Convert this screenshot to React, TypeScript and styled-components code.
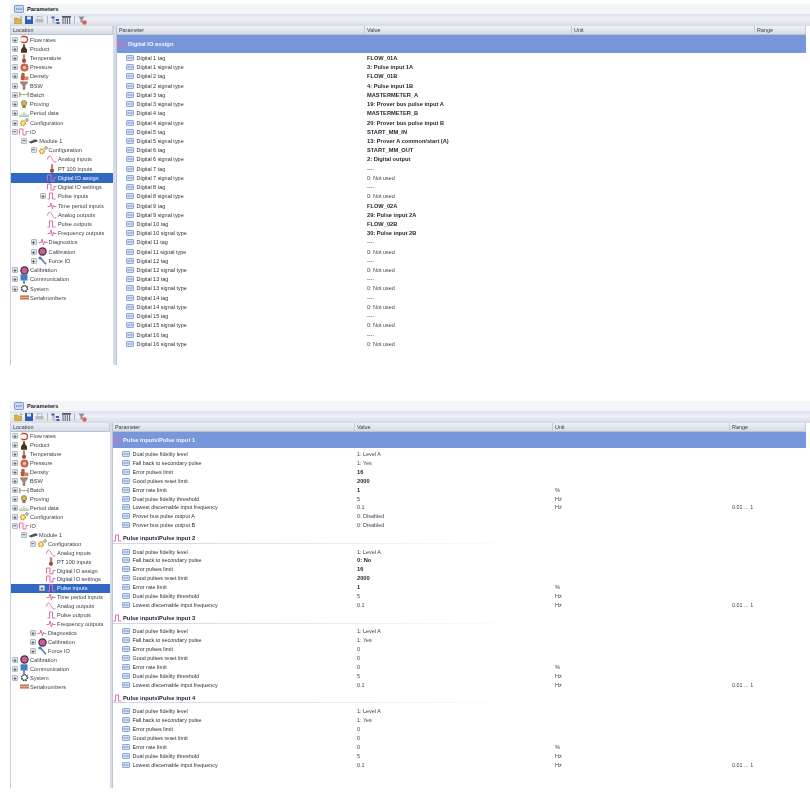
import React from "react";
import styled, { createGlobalStyle } from "styled-components";

type IconKind =
  | "flow" | "bottle" | "thermo" | "gauge" | "density" | "bsw" | "batch" | "proving" | "chart"
  | "gear" | "digital" | "module" | "analog" | "pulse" | "freq" | "calib" | "wrench" | "comm"
  | "system" | "serial";

interface TreeNode {
  label: string;
  icon: IconKind;
  level: number;
  toggle?: "+" | "-";
  selected?: boolean;
}

interface ParamRow {
  name: string;
  value: string;
  strong?: boolean;
  unit?: string;
  range?: string;
}

interface Metrics {
  columns: string;
  treeRow: number;
  treeStep: number;
  row: number;
  rowIndent: number;
  bannerHeight: number;
  bannerGap: number;
  height: number;
  treeWidth: number;
  splitter: number;
}

const GlobalStyle = createGlobalStyle`
  html, body {
    margin: 0;
    background: #fff;
    overflow: hidden;
  }
  body {
    font-family: "Liberation Sans", Arial, sans-serif;
    font-size: 5.45px;
    color: #2c3038;
  }
`;

const Page = styled.div`
  width: 810px;
  height: 797px;
  padding: 4px 0 0 10px;
  box-sizing: border-box;
  display: flex;
  flex-direction: column;
  gap: 36px;
  filter: blur(0.35px);
`;

const Window = styled.section<{ $height: number }>`
  height: ${(p) => p.$height}px;
  display: flex;
  flex-direction: column;
`;

const TitleBar = styled.header`
  height: 10px;
  flex: none;
  display: flex;
  align-items: center;
  gap: 3px;
  padding-left: 4px;
  background: #f3f5f9;
  font-weight: bold;
  font-size: 5.8px;
  color: #20242c;
`;

const ToolBar = styled.div`
  height: 12px;
  flex: none;
  display: flex;
  align-items: center;
  gap: 2px;
  padding-left: 4px;
  background: linear-gradient(#dde3ec, #eceff4 45%, #d5dbe6);
`;

const ToolSep = styled.span`
  width: 1px;
  height: 8px;
  margin: 0 1px;
  background: #b4bcc9;
`;

const Body = styled.div`
  flex: 1;
  min-height: 0;
  display: flex;
  border-left: 1px solid #c3cfe2;
`;

const TreePane = styled.nav<{ $width: number }>`
  width: ${(p) => p.$width}px;
  flex: none;
  display: flex;
  flex-direction: column;
`;

const Splitter = styled.div<{ $width: number }>`
  width: ${(p) => p.$width}px;
  box-sizing: border-box;
  flex: none;
  background: #d5dce7;
  border-right: 1px solid #b9c5d6;
`;

const HeadCell = styled.div`
  height: 8px;
  line-height: 8px;
  padding-left: 2px;
  background: linear-gradient(#eef1f5, #d6dce5);
  border-bottom: 1px solid #b8c2d2;
  border-right: 1px solid #c4ccd8;
  color: #3a4048;
  font-size: 5.4px;
  box-sizing: content-box;
`;

const TreeList = styled.ul`
  list-style: none;
  margin: 0;
  padding: 0;
`;

const TreeItem = styled.li<{ $height: number; $indent: number; $selected?: boolean }>`
  height: ${(p) => p.$height}px;
  display: flex;
  align-items: center;
  padding-left: ${(p) => p.$indent}px;
  background: ${(p) => (p.$selected ? "#3168c4" : "transparent")};
  color: ${(p) => (p.$selected ? "#f2f5fb" : "#3a3f48")};
  font-size: 5.6px;
  white-space: nowrap;
`;

const Toggle = styled.span`
  width: 6px;
  height: 6px;
  flex: none;
  display: flex;
  align-items: center;
  justify-content: center;
  border: 1px solid #b4b9c1;
  box-sizing: border-box;
  border-radius: 1px;
  background: #e2e5ea;
  font-size: 6px;
  line-height: 1;
  font-weight: bold;
  color: #25282e;
`;

const ToggleSlot = styled.span`
  width: 7px;
  flex: none;
  display: flex;
`;

const IconSlot = styled.span`
  width: 10px;
  flex: none;
  display: flex;
  justify-content: center;
  margin-right: 1px;
`;

const Grid = styled.main`
  flex: 1;
  min-width: 0;
  margin-right: 4px;
  display: flex;
  flex-direction: column;
`;

const GridHead = styled.div<{ $columns: string }>`
  display: grid;
  grid-template-columns: ${(p) => p.$columns};
`;

const Banner = styled.div<{ $height: number; $gap: number }>`
  height: ${(p) => p.$height}px;
  margin-bottom: ${(p) => p.$gap}px;
  display: flex;
  align-items: center;
  gap: 1px;
  background: #7896dc;
  color: #f5f7fc;
  font-weight: bold;
  font-size: 5.8px;
`;

const SectionTitle = styled.div`
  height: 9px;
  margin-bottom: 3.3px;
  padding-top: 4px;
  box-sizing: content-box;
  display: flex;
  align-items: center;
  gap: 1px;
  font-weight: bold;
  font-size: 5.8px;
  color: #20242c;
  border-bottom: 1px solid transparent;
  border-image: linear-gradient(to right, #ccd5e4, #eef1f6 40%, #fff 60%) 1;
`;

const Row = styled.div<{ $columns: string; $height: number }>`
  height: ${(p) => p.$height}px;
  display: grid;
  grid-template-columns: ${(p) => p.$columns};
  align-items: center;
  white-space: nowrap;
`;

const NameCell = styled.div<{ $indent: number }>`
  display: flex;
  align-items: center;
  gap: 2.5px;
  padding-left: ${(p) => p.$indent}px;
`;

const ValueCell = styled.div<{ $strong?: boolean }>`
  padding-left: 2px;
  font-weight: ${(p) => (p.$strong ? "bold" : "normal")};
  font-size: ${(p) => (p.$strong ? "5.7px" : "5.45px")};
  color: ${(p) => (p.$strong ? "#1c2028" : "#3a3f48")};
`;

const ParamIcon = () => (
  <svg width="8" height="6" viewBox="0 0 8 6">
    <rect x="0.5" y="0.5" width="7" height="5" rx="0.6" fill="#d5e2f6" stroke="#6f97d6" strokeWidth="0.8" />
    <path d="M1.6 3h1.2M3.4 3h1.2M5.2 3h1.2" stroke="#5478b0" strokeWidth="1" />
  </svg>
);

const wave = { fill: "none", stroke: "#df6cb0", strokeWidth: 1 };

const TreeIcon = ({ kind }: { kind: IconKind }) => {
  switch (kind) {
    case "flow":
      return (
        <svg width="9" height="9" viewBox="0 0 9 9">
          <path d="M1.5 1.5h3a3 3 0 0 1 0 6h-3" fill="none" stroke="#c9452f" strokeWidth="1.3" />
          <path d="M0 2.5h2M0 6.5h2" stroke="#d9a040" strokeWidth="0.8" />
        </svg>
      );
    case "bottle":
      return (
        <svg width="8" height="9" viewBox="0 0 8 9">
          <path d="M3.2 .3h1.600v2.200l2.200 3v3.300H1V5.500l2.200-3z" fill="#4a3518" />
        </svg>
      );
    case "thermo":
      return (
        <svg width="8" height="9" viewBox="0 0 8 9">
          <rect x="2.8" y="0.3" width="2.4" height="6" fill="#bd8878" />
          <circle cx="4" cy="6.8" r="2.1" fill="#a04a3a" />
        </svg>
      );
    case "gauge":
      return (
        <svg width="9" height="9" viewBox="0 0 9 9">
          <circle cx="4.5" cy="4.5" r="4" fill="#c4674c" />
          <circle cx="4.5" cy="4.5" r="1.8" fill="#e9bfae" />
        </svg>
      );
    case "density":
      return (
        <svg width="9" height="9" viewBox="0 0 9 9">
          <circle cx="3" cy="2.5" r="1.8" fill="#b65a3a" />
          <rect x="0.8" y="3.5" width="4" height="4.8" rx="0.8" fill="#b65a3a" />
          <rect x="4.5" y="4.5" width="4" height="3.8" rx="0.8" fill="#d58a68" />
        </svg>
      );
    case "bsw":
      return (
        <svg width="8" height="9" viewBox="0 0 8 9">
          <path d="M.4.800h7.200v1L5 4.800V8.600H3V4.800L.4 1.800z" fill="#a58a72" stroke="#6c5a4a" strokeWidth="0.4" />
        </svg>
      );
    case "batch":
      return (
        <svg width="10" height="7" viewBox="0 0 10 7">
          <path d="M.8 1v5M9.200 1v5" stroke="#7f7450" strokeWidth="0.9" />
          <path d="M1 3.5h2.500M6.500 3.500h2.500" stroke="#7aa860" strokeWidth="0.9" />
          <circle cx="5" cy="3.5" r="0.8" fill="#6f8a50" />
        </svg>
      );
    case "proving":
      return (
        <svg width="8" height="9" viewBox="0 0 8 9">
          <circle cx="4" cy="3.2" r="2.8" fill="#cdb060" stroke="#7a6228" strokeWidth="0.5" />
          <path d="M2.5 5.500v3l1.500-1 1.500 1v-3" fill="#8a7038" />
        </svg>
      );
    case "chart":
      return (
        <svg width="10" height="7" viewBox="0 0 10 7">
          <path d="M1 6V4.500M3 6V3.500M5 6V2M7 6V3.500M9 6V4.500" stroke="#a4bc98" strokeWidth="1" />
          <path d="M0 6.4h10" stroke="#8ca880" strokeWidth="0.7" />
        </svg>
      );
    case "gear":
      return (
        <svg width="10" height="9" viewBox="0 0 10 9">
          <circle cx="4" cy="5.3" r="2.3" fill="#fbe6b0" stroke="#e09a20" strokeWidth="1.5" strokeDasharray="1.5 .5" />
          <circle cx="8" cy="2" r="1.3" fill="#fff" stroke="#6f6f68" strokeWidth="0.8" />
        </svg>
      );
    case "digital":
      return (
        <svg width="10" height="8" viewBox="0 0 10 8">
          <path d="M.5 6.500V1H4v6h3V3.500h2.500" {...wave} />
        </svg>
      );
    case "module":
      return (
        <svg width="10" height="6" viewBox="0 0 10 6">
          <path d="M.5 4 7 1.200l2.500.8v1.400L3 5.500z" fill="#55585e" />
        </svg>
      );
    case "analog":
      return (
        <svg width="10" height="8" viewBox="0 0 10 8">
          <path d="M.5 4.500C1.500 0 3.500 0 5 3.500S8 8 9.500 6" {...wave} />
        </svg>
      );
    case "pulse":
      return (
        <svg width="9" height="8" viewBox="0 0 9 8">
          <path d="M.5 7H2.500V1H5.500V7H8.500" {...wave} />
        </svg>
      );
    case "freq":
      return (
        <svg width="10" height="8" viewBox="0 0 10 8">
          <path d="M.5 4.500H3L4 1l1.500 6L6.500 3 7 4.500H9.500" {...wave} />
        </svg>
      );
    case "calib":
      return (
        <svg width="9" height="9" viewBox="0 0 9 9">
          <circle cx="4.5" cy="4.5" r="4.2" fill="#34343c" />
          <circle cx="4.5" cy="4.5" r="3" fill="#d4589a" />
        </svg>
      );
    case "wrench":
      return (
        <svg width="9" height="9" viewBox="0 0 9 9">
          <path d="M2.5 2 8 8.200" stroke="#4f7cc0" strokeWidth="1.6" />
          <circle cx="2" cy="2" r="1.6" fill="#4f7cc0" />
        </svg>
      );
    case "comm":
      return (
        <svg width="8" height="10" viewBox="0 0 8 10">
          <rect x="0.5" y="0.3" width="7" height="6.2" fill="#4a7cc4" />
          <path d="M4 6.500V9.800" stroke="#3a5a90" strokeWidth="1.4" />
        </svg>
      );
    case "system":
      return (
        <svg width="9" height="9" viewBox="0 0 9 9">
          <circle cx="4.5" cy="4.5" r="2.9" fill="none" stroke="#34363c" strokeWidth="1.7" strokeDasharray="1.5 .7" />
        </svg>
      );
    case "serial":
      return (
        <svg width="9" height="5" viewBox="0 0 9 5">
          <rect width="9" height="5" fill="#e0ae96" />
          <path d="M0 1.500h9M0 3.500h9" stroke="#bd6c50" strokeWidth="0.8" />
        </svg>
      );
  }
};

const ToolIcons = () => (
  <>
    <svg width="9" height="8" viewBox="0 0 9 8">
      <path d="M.5 2h3l1 1h3v4.500h-7z" fill="#e0b040" stroke="#a87c20" strokeWidth="0.5" />
      <path d="M6 .5 8 2" stroke="#4a7a38" strokeWidth="0.8" />
    </svg>
    <svg width="8" height="8" viewBox="0 0 8 8">
      <rect width="8" height="8" rx="0.6" fill="#2f5fb0" />
      <rect x="2" y="0.5" width="4" height="3" fill="#dfe8f6" />
    </svg>
    <svg width="9" height="8" viewBox="0 0 9 8">
      <rect x="2.5" y="0.5" width="4" height="3" fill="#eeeeee" stroke="#a0a5ac" strokeWidth="0.5" />
      <rect x="0.5" y="3" width="8" height="3.5" rx="0.6" fill="#b8bcc2" />
    </svg>
    <ToolSep />
    <svg width="9" height="9" viewBox="0 0 9 9">
      <path d="M2 1v6h5M2 4h4" fill="none" stroke="#7c8798" strokeWidth="0.6" />
      <rect x="0.5" y="0.5" width="3" height="2" fill="#3a5ab8" />
      <rect x="5" y="3" width="3" height="2" fill="#3a5ab8" />
      <rect x="5.5" y="6" width="3" height="2" fill="#3a5ab8" />
    </svg>
    <svg width="9" height="8" viewBox="0 0 9 8">
      <rect width="9" height="1.8" fill="#555a62" />
      <path d="M1 2v6M3.200 2v6M5.400 2v6M7.600 2v6" stroke="#6c7178" strokeWidth="1.1" />
    </svg>
    <ToolSep />
    <svg width="9" height="9" viewBox="0 0 9 9">
      <path d="M.5.500h6L4.500 3.500V7L2.500 6V3.500z" fill="#8a929c" />
      <circle cx="6.5" cy="6.5" r="2.2" fill="#e0604a" />
    </svg>
  </>
);

const TitleIcon = () => (
  <svg width="10" height="8" viewBox="0 0 10 8">
    <rect x="0.5" y="0.5" width="9" height="7" rx="0.8" fill="#c9d9f2" stroke="#5f86c4" strokeWidth="0.8" />
    <path d="M2 4h1.500M4.200 4h1.500M6.400 4h1.500" stroke="#4a6ea8" strokeWidth="1.1" />
  </svg>
);

const buildTree = (selected: string): TreeNode[] => {
  const nodes: TreeNode[] = [
    { label: "Flow rates", icon: "flow", level: 0, toggle: "+" },
    { label: "Product", icon: "bottle", level: 0, toggle: "+" },
    { label: "Temperature", icon: "thermo", level: 0, toggle: "+" },
    { label: "Pressure", icon: "gauge", level: 0, toggle: "+" },
    { label: "Density", icon: "density", level: 0, toggle: "+" },
    { label: "BSW", icon: "bsw", level: 0, toggle: "+" },
    { label: "Batch", icon: "batch", level: 0, toggle: "+" },
    { label: "Proving", icon: "proving", level: 0, toggle: "+" },
    { label: "Period data", icon: "chart", level: 0, toggle: "+" },
    { label: "Configuration", icon: "gear", level: 0, toggle: "+" },
    { label: "IO", icon: "digital", level: 0, toggle: "-" },
    { label: "Module 1", icon: "module", level: 1, toggle: "-" },
    { label: "Configuration", icon: "gear", level: 2, toggle: "-" },
    { label: "Analog inputs", icon: "analog", level: 3 },
    { label: "PT 100 inputs", icon: "thermo", level: 3 },
    { label: "Digital IO assign", icon: "digital", level: 3 },
    { label: "Digital IO settings", icon: "digital", level: 3 },
    { label: "Pulse inputs", icon: "pulse", level: 3, toggle: "+" },
    { label: "Time period inputs", icon: "freq", level: 3 },
    { label: "Analog outputs", icon: "analog", level: 3 },
    { label: "Pulse outputs", icon: "pulse", level: 3 },
    { label: "Frequency outputs", icon: "freq", level: 3 },
    { label: "Diagnostics", icon: "freq", level: 2, toggle: "+" },
    { label: "Calibration", icon: "calib", level: 2, toggle: "+" },
    { label: "Force IO", icon: "wrench", level: 2, toggle: "+" },
    { label: "Calibration", icon: "calib", level: 0, toggle: "+" },
    { label: "Communication", icon: "comm", level: 0, toggle: "+" },
    { label: "System", icon: "system", level: 0, toggle: "+" },
    { label: "Serialnumbers", icon: "serial", level: 0 },
  ];
  return nodes.map((n) => ({ ...n, selected: n.label === selected }));
};

const digitalValues: [string, string][] = [
  ["FLOW_01A", "3: Pulse input 1A"],
  ["FLOW_01B", "4: Pulse input 1B"],
  ["MASTERMETER_A", "19: Prover bus pulse input A"],
  ["MASTERMETER_B", "20: Prover bus pulse input B"],
  ["START_MM_IN", "13: Prover A common/start (A)"],
  ["START_MM_OUT", "2: Digital output"],
  ["----", "0: Not used"],
  ["----", "0: Not used"],
  ["FLOW_02A", "29: Pulse input 2A"],
  ["FLOW_02B", "30: Pulse input 2B"],
  ["----", "0: Not used"],
  ["----", "0: Not used"],
  ["----", "0: Not used"],
  ["----", "0: Not used"],
  ["----", "0: Not used"],
  ["----", "0: Not used"],
];

const digitalRows: ParamRow[] = digitalValues.flatMap(([tag, type], i) => [
  { name: `Digital ${i + 1} tag`, value: tag, strong: tag !== "----" },
  { name: `Digital ${i + 1} signal type`, value: type, strong: type !== "0: Not used" },
]);

const pulseRows = (fallback: string, limit: string, reset: string, rate: string, customised: boolean, prover: boolean): ParamRow[] => {
  const rows: ParamRow[] = [
    { name: "Dual pulse fidelity level", value: "1: Level A" },
    { name: "Fall back to secondary pulse", value: fallback, strong: fallback === "0: No" },
    { name: "Error pulses limit", value: limit, strong: customised },
    { name: "Good pulses reset limit", value: reset, strong: customised },
    { name: "Error rate limit", value: rate, strong: customised, unit: "%" },
    { name: "Dual pulse fidelity threshold", value: "5", unit: "Hz" },
    { name: "Lowest discernable input frequency", value: "0.1", unit: "Hz", range: "0.01 ... 1" },
  ];
  if (prover) {
    rows.push(
      { name: "Prover bus pulse output A", value: "0: Disabled" },
      { name: "Prover bus pulse output B", value: "0: Disabled" }
    );
  }
  return rows;
};

const topMetrics: Metrics = {
  columns: "248px 207px 183px 1fr",
  treeRow: 9.22,
  treeStep: 9.3,
  row: 9.22,
  rowIndent: 9,
  bannerHeight: 18,
  bannerGap: 0.4,
  height: 361,
  treeWidth: 102,
  splitter: 4,
};

const bottomMetrics: Metrics = {
  columns: "242px 198px 177px 1fr",
  treeRow: 8.95,
  treeStep: 9,
  row: 8.93,
  rowIndent: 9,
  bannerHeight: 16,
  bannerGap: 1.5,
  height: 387,
  treeWidth: 99,
  splitter: 3,
};

const ParamRows = ({ rows, m }: { rows: ParamRow[]; m: Metrics }) => (
  <>
    {rows.map((r) => (
      <Row key={r.name} $columns={m.columns} $height={m.row}>
        <NameCell $indent={m.rowIndent}>
          <ParamIcon />
          {r.name}
        </NameCell>
        <ValueCell $strong={r.strong}>{r.value}</ValueCell>
        <ValueCell>{r.unit}</ValueCell>
        <ValueCell>{r.range}</ValueCell>
      </Row>
    ))}
  </>
);

const ParametersWindow = ({
  metrics,
  selected,
  children,
}: {
  metrics: Metrics;
  selected: string;
  children: React.ReactNode;
}) => (
  <Window $height={metrics.height}>
    <TitleBar>
      <TitleIcon />
      Parameters
    </TitleBar>
    <ToolBar>
      <ToolIcons />
    </ToolBar>
    <Body>
      <TreePane $width={metrics.treeWidth}>
        <HeadCell>Location</HeadCell>
        <TreeList>
          {buildTree(selected).map((n, i) => (
            <TreeItem
              key={i}
              $height={metrics.treeRow}
              $indent={1 + n.level * metrics.treeStep}
              $selected={n.selected}
            >
              <ToggleSlot>{n.toggle && <Toggle>{n.toggle === "+" ? "+" : "−"}</Toggle>}</ToggleSlot>
              <IconSlot>
                <TreeIcon kind={n.icon} />
              </IconSlot>
              {n.label}
            </TreeItem>
          ))}
        </TreeList>
      </TreePane>
      <Splitter $width={metrics.splitter} />
      <Grid>
        <GridHead $columns={metrics.columns}>
          <HeadCell>Parameter</HeadCell>
          <HeadCell>Value</HeadCell>
          <HeadCell>Unit</HeadCell>
          <HeadCell>Range</HeadCell>
        </GridHead>
        {children}
      </Grid>
    </Body>
  </Window>
);

const Section = ({ title, rows, m }: { title: string; rows: ParamRow[]; m: Metrics }) => (
  <>
    <SectionTitle>
      <TreeIcon kind="pulse" />
      {title}
    </SectionTitle>
    <ParamRows rows={rows} m={m} />
  </>
);

const App: React.FC = () => (
  <>
    <GlobalStyle />
    <Page>
      <ParametersWindow metrics={topMetrics} selected="Digital IO assign">
        <Banner $height={topMetrics.bannerHeight} $gap={topMetrics.bannerGap}>
          <TreeIcon kind="digital" />
          Digital IO assign
        </Banner>
        <ParamRows rows={digitalRows} m={topMetrics} />
      </ParametersWindow>
      <ParametersWindow metrics={bottomMetrics} selected="Pulse inputs">
        <Banner $height={bottomMetrics.bannerHeight} $gap={bottomMetrics.bannerGap}>
          <TreeIcon kind="pulse" />
          Pulse inputs\Pulse input 1
        </Banner>
        <ParamRows rows={pulseRows("1: Yes", "16", "2000", "1", true, true)} m={bottomMetrics} />
        <Section title="Pulse inputs\Pulse input 2" rows={pulseRows("0: No", "16", "2000", "1", true, false)} m={bottomMetrics} />
        <Section title="Pulse inputs\Pulse input 3" rows={pulseRows("1: Yes", "0", "0", "0", false, false)} m={bottomMetrics} />
        <Section title="Pulse inputs\Pulse input 4" rows={pulseRows("1: Yes", "0", "0", "0", false, false)} m={bottomMetrics} />
      </ParametersWindow>
    </Page>
  </>
);

export default App;
